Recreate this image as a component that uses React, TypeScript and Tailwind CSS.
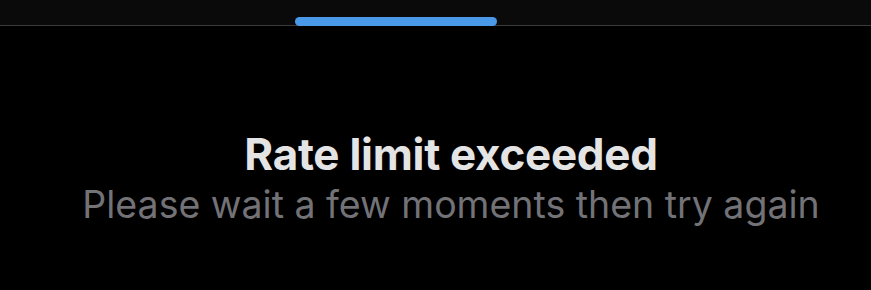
export default function App() {
  return (
    <div className="w-[871px] h-[290px] bg-black overflow-hidden flex flex-col" style={{ fontFamily: 'Inter, "Noto Sans", sans-serif' }}>
      <div className="h-[26px] bg-[#0a0a0a] border-b border-[#3a3a3a] flex items-end shrink-0">
        <div className="ml-[295px] w-[202px] h-[9px] rounded-full bg-[#4a99e9] mb-[-1px]" />
      </div>
      <div className="flex flex-col items-center pl-[31px] pt-[103px]">
        <div className="text-[44px] leading-[50px] font-bold text-[#e4e4e4] tracking-[-0.3px]">Rate limit exceeded</div>
        <div className="mt-[5px] text-[37.5px] leading-[42px] text-[#727277]">Please wait a few moments then try again</div>
      </div>
    </div>
  );
}
